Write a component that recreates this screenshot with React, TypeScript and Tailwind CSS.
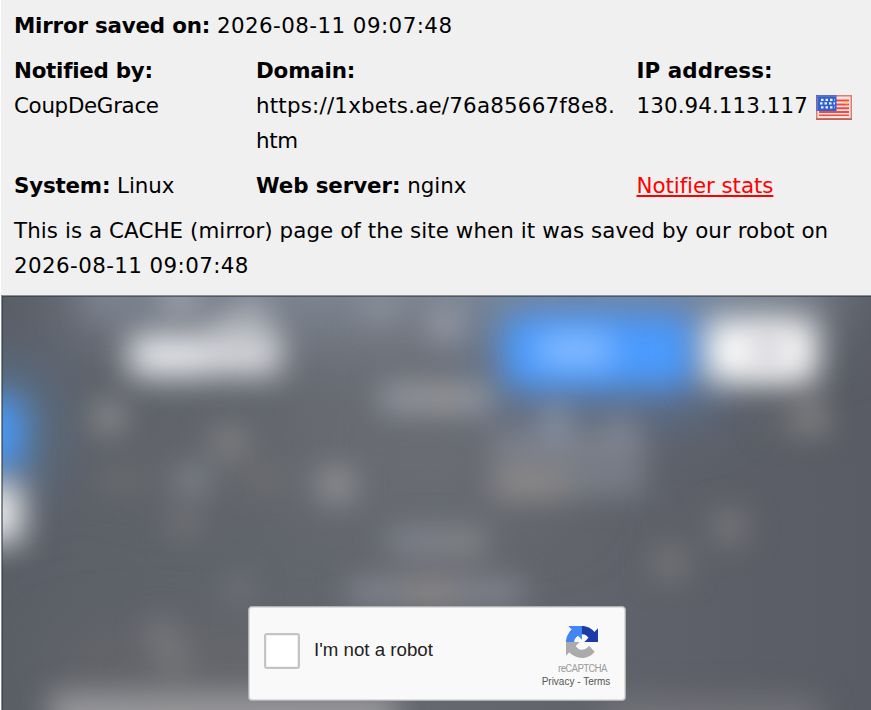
import React from 'react';

type Blob = { x: number; y: number; w: number; h: number; c: string; o?: number };

const wideBlobs: Blob[] = [
  { x: 75, y: 220, w: 760, h: 108, c: '#808a97', o: 1 },
  { x: 100, y: 300, w: 430, h: 60, c: '#777d8a', o: 0.4 },
  { x: 300, y: 330, w: 270, h: 190, c: '#70747b', o: 0.4 },
  { x: 500, y: 305, w: 210, h: 95, c: '#5886c6', o: 0.9 },
  { x: -60, y: 375, w: 100, h: 110, c: '#5886b6', o: 0.7 },
  { x: 50, y: 640, w: 300, h: 50, c: '#6f6d6c', o: 0.6 },
  { x: 110, y: 440, w: 210, h: 50, c: '#707070', o: 0.35 },
];

const softBlobs: Blob[] = [
  { x: 88, y: 292, w: 30, h: 22, c: '#8b909c', o: 0.7 },
  { x: 164, y: 284, w: 32, h: 26, c: '#b0b2ba', o: 0.9 },
  { x: 214, y: 314, w: 54, h: 32, c: '#a5a8b0', o: 1 },
  { x: 236, y: 294, w: 32, h: 30, c: '#a0a4ae', o: 0.9 },
  { x: 362, y: 296, w: 34, h: 22, c: '#959ba3', o: 0.8 },
  { x: 432, y: 309, w: 28, h: 30, c: '#a4a8b2', o: 0.85 },
  { x: 380, y: 385, w: 54, h: 26, c: '#989ca5', o: 1 },
  { x: 425, y: 385, w: 32, h: 27, c: '#9f9c99', o: 1 },
  { x: 455, y: 385, w: 38, h: 26, c: '#989da5', o: 1 },
  { x: 94, y: 402, w: 30, h: 30, c: '#969595', o: 0.95 },
  { x: 212, y: 426, w: 34, h: 32, c: '#868687', o: 0.85 },
  { x: 318, y: 468, w: 36, h: 34, c: '#969698', o: 0.9 },
  { x: 174, y: 466, w: 36, h: 28, c: '#858a90', o: 0.85 },
  { x: 96, y: 470, w: 50, h: 20, c: '#777472', o: 0.6 },
  { x: 248, y: 470, w: 36, h: 18, c: '#7b7876', o: 0.6 },
  { x: 170, y: 510, w: 28, h: 28, c: '#7c7b7a', o: 0.75 },
  { x: 226, y: 576, w: 26, h: 26, c: '#787a82', o: 0.75 },
  { x: 492, y: 434, w: 154, h: 27, c: '#888b95', o: 0.85 },
  { x: 492, y: 471, w: 80, h: 25, c: '#979291', o: 0.95 },
  { x: 570, y: 469, w: 76, h: 25, c: '#828893', o: 0.85 },
  { x: 542, y: 400, w: 28, h: 38, c: '#8a96a8', o: 0.85 },
  { x: 606, y: 412, w: 28, h: 28, c: '#868c9b', o: 0.8 },
  { x: 388, y: 529, w: 64, h: 25, c: '#868993', o: 0.95 },
  { x: 450, y: 529, w: 36, h: 26, c: '#8b8c8b', o: 0.95 },
  { x: 348, y: 579, w: 60, h: 26, c: '#868893', o: 0.95 },
  { x: 405, y: 579, w: 54, h: 26, c: '#918e8c', o: 1 },
  { x: 455, y: 579, w: 69, h: 26, c: '#868893', o: 0.95 },
  { x: 796, y: 403, w: 30, h: 30, c: '#8f8d8b', o: 0.95 },
  { x: 764, y: 412, w: 30, h: 20, c: '#757577', o: 0.6 },
  { x: 713, y: 511, w: 32, h: 32, c: '#7f7f7e', o: 0.85 },
  { x: 654, y: 547, w: 32, h: 32, c: '#7b7b7a', o: 0.85 },
  { x: 148, y: 620, w: 26, h: 28, c: '#818183', o: 0.8 },
  { x: 160, y: 645, w: 28, h: 28, c: '#818183', o: 0.8 },
  { x: 50, y: 692, w: 346, h: 60, c: '#98989b', o: 1 },
  { x: 600, y: 698, w: 220, h: 50, c: '#77767b', o: 0.85 },
];

function Blobs({ items, filter }: { items: Blob[]; filter: string }) {
  return (
    <g filter={filter}>
      {items.map((b, i) => (
        <rect key={i} x={b.x} y={b.y} width={b.w} height={b.h} rx={6} fill={b.c} opacity={b.o ?? 1} />
      ))}
    </g>
  );
}

function BlurFilter({ id, amount }: { id: string; amount: number }) {
  return (
    <filter id={id} filterUnits="userSpaceOnUse" x="-150" y="150" width="1200" height="700" colorInterpolationFilters="sRGB">
      <feGaussianBlur stdDeviation={amount} />
    </filter>
  );
}

function Backdrop() {
  return (
    <svg className="col-start-1 row-start-1 block h-[415px] w-[870px]" viewBox="1 295 870 415">
      <defs>
        <linearGradient id="base" x1="0" x2="1" y1="0" y2="0">
          <stop offset="0" stopColor="#5a5e66" />
          <stop offset="0.2" stopColor="#5f636a" />
          <stop offset="0.5" stopColor="#65686f" />
          <stop offset="0.8" stopColor="#5d6068" />
          <stop offset="1" stopColor="#595c64" />
        </linearGradient>
        <BlurFilter id="wide" amount={36} />
        <BlurFilter id="soft" amount={15} />
        <BlurFilter id="mid" amount={16} />
      </defs>
      <rect x="0" y="295" width="871" height="415" fill="url(#base)" />
      <Blobs items={wideBlobs} filter="url(#wide)" />
      <Blobs items={softBlobs} filter="url(#soft)" />
      <g filter="url(#mid)">
        <rect x="130" y="335" width="76" height="41" fill="#ebecef" />
        <rect x="205" y="332" width="76" height="43" fill="#d8d9dd" />
        <rect x="506" y="318" width="183" height="66" fill="#4a9bff" />
        <rect x="706" y="319" width="111" height="64" fill="#fcfcfc" />
        <rect x="-60" y="399" width="82" height="66" fill="#4a98f4" />
        <rect x="-60" y="483" width="82" height="60" fill="#ececee" />
      </g>
      <g filter="url(#mid)">
        <rect x="539" y="336" width="72" height="28" fill="#93c2ff" />
        <rect x="752" y="334" width="32" height="32" fill="#cac6ce" />
      </g>
      <path d="M1.5 710V295.5H871" fill="none" stroke="#8b9094" strokeWidth="1" />
      <path d="M2.5 710V296.5H871" fill="none" stroke="#263445" strokeWidth="1" opacity="0.55" />
    </svg>
  );
}

function Flag() {
  return (
    <svg className="mt-[4px] ml-[8px] h-[25px] w-[36px] shrink-0" viewBox="0 0 36 25">
      <defs>
        <filter id="flagBlur" x="0" y="0" width="1" height="1" colorInterpolationFilters="sRGB">
          <feGaussianBlur stdDeviation="0.7" />
        </filter>
      </defs>
      <rect width="36" height="25" fill="#d87f70" />
      <rect x="1.5" y="1.5" width="33" height="21.5" fill="#fbe4e0" />
      <g filter="url(#flagBlur)">
        <path d="M3 5.5H33M3 9.5H33M3 13.3H33M3 17H33M3 20.5H33" stroke="#f04a48" strokeWidth="2" />
        <rect x="0" y="0" width="20.5" height="16" fill="#2f62cd" />
        <path d="M1 1H20" stroke="#6e6fbd" strokeWidth="1.6" />
        <path d="M1.2 1V16" stroke="#7371bd" strokeWidth="2" />
        <path d="M5 4.8H19M4 8.4H19M5 12.4H19" stroke="#e6f0ff" strokeWidth="2.3" strokeDasharray="2.5 2" />
        <circle cx="30.5" cy="8" r="1.4" fill="#ffc14d" />
      </g>
      <path d="M0 24.3H36" stroke="#b76558" strokeWidth="1.4" />
    </svg>
  );
}

function CaptchaLogo() {
  return (
    <svg className="h-[32px] w-[32px]" viewBox="0 0 64 64">
      <path fill="#1c3aa9" d="M64 31.955l-.033-1.37V4.687l-7.16 7.16C50.948 4.674 42.033.093 32.05.093c-10.4 0-19.622 4.96-25.458 12.64l11.736 11.86a15.55 15.55 0 0 1 4.754-5.334c2.05-1.6 4.952-2.906 8.968-2.906.485 0 .86.057 1.135.163 4.976.393 9.288 3.14 11.828 7.124l-8.307 8.307L64 31.953" />
      <path fill="#4285f4" d="M31.862.094l-1.37.033H4.594l7.16 7.16C4.58 13.147 0 22.06 0 32.046c0 10.4 4.96 19.622 12.64 25.458L24.5 45.768a15.55 15.55 0 0 1-5.334-4.754c-1.6-2.05-2.906-4.952-2.906-8.968 0-.485.057-.86.163-1.135.393-4.976 3.14-9.288 7.124-11.828l8.307 8.307L31.86.095" />
      <path fill="#ababab" d="M.001 32.045l.033 1.37v25.898l7.16-7.16c5.86 7.173 14.774 11.754 24.76 11.754 10.4 0 19.622-4.96 25.458-12.64l-11.736-11.86a15.55 15.55 0 0 1-4.754 5.334c-2.05 1.6-4.952 2.906-8.968 2.906-.485 0-.86-.057-1.135-.163-4.976-.393-9.288-3.14-11.828-7.124l8.307-8.307c-10.522.04-22.4.066-27.295-.005" />
    </svg>
  );
}

function Captcha() {
  return (
    <div className="z-10 col-start-1 row-start-1 mt-[311px] ml-[247px] flex h-[95px] w-[378px] items-center rounded-[4px] border border-[#aeb0b3] bg-[#f9f9f9] shadow-[inset_0_0_0_1px_#dedede]">
      <div className="mt-[-5px] ml-[15px] h-[36px] w-[36px] rounded-[3px] border-2 border-[#c4c4c4] bg-white shadow-[inset_0_0_0_1px_#f0f0f0]" />
      <div className="mt-[-8px] ml-[14px] font-['Liberation_Sans',sans-serif] text-[18.7px] whitespace-nowrap text-[#222]">
        I'm not a robot
      </div>
      <div className="mt-[3px] mr-[14px] ml-auto flex w-[70px] flex-col items-center">
        <div className="flex flex-col items-center pt-[3px] pl-[13px]">
          <CaptchaLogo />
          <div className="mt-[5px] font-['Roboto',sans-serif] text-[10px] leading-[12px] tracking-[-0.55px] text-[#9b9b9b]">
            reCAPTCHA
          </div>
        </div>
        <div className="mt-[1px] font-['Liberation_Sans',sans-serif] text-[10px] leading-[12px] whitespace-nowrap text-[#555]">
          Privacy - Terms
        </div>
      </div>
    </div>
  );
}

export default function App() {
  return (
    <div className="h-[710px] w-[871px] overflow-hidden bg-white pl-px font-['DejaVu_Sans',Verdana,sans-serif] text-[21.4px] leading-[35px] text-black">
      <div className="h-[295px] bg-[#f0f0f0] pt-[8px] pl-[13px]">
        <div className="whitespace-nowrap">
          <b className="tracking-[-0.2px]">Mirror saved on:</b> <span className="tracking-[0.44px]">2026-08-11 09:07:48</span>
        </div>
        <div className="mt-[10px] grid grid-cols-[242px_381px_1fr] gap-y-[10px] whitespace-nowrap">
          <div>
            <b className="tracking-[-0.25px]">Notified by:</b>
            <br />
            <span className="tracking-[-0.32px]">CoupDeGrace</span>
          </div>
          <div>
            <b className="tracking-[-0.15px]">Domain:</b>
            <br />
            <span className="tracking-[0.21px]">https://1xbets.ae/76a85667f8e8.</span>
            <br />
            <span className="tracking-[-0.3px]">htm</span>
          </div>
          <div className="ml-[-0.5px]">
            <b className="tracking-[0.08px]">IP address:</b>
            <div className="flex h-[35px] items-center">
              <span className="tracking-[0.1px]">130.94.113.117</span>
              <Flag />
            </div>
          </div>
          <div>
            <b className="tracking-[-0.2px]">System:</b> <span className="tracking-[-0.1px]">Linux</span>
          </div>
          <div>
            <b className="tracking-[-0.1px]">Web server:</b> <span>nginx</span>
          </div>
          <div className="ml-[-0.5px]">
            <a className="tracking-[-0.07px] text-[#ff0000] underline decoration-2 underline-offset-2">Notifier stats</a>
          </div>
        </div>
        <div className="mt-[10px] whitespace-nowrap">
          <span className="tracking-[0.075px]">This is a CACHE (mirror) page of the site when it was saved by our robot on</span>
          <br />
          <span className="tracking-[0.4px]">2026-08-11 09:07:48</span>
        </div>
      </div>
      <div className="grid grid-cols-[870px]">
        <Backdrop />
        <Captcha />
      </div>
    </div>
  );
}
